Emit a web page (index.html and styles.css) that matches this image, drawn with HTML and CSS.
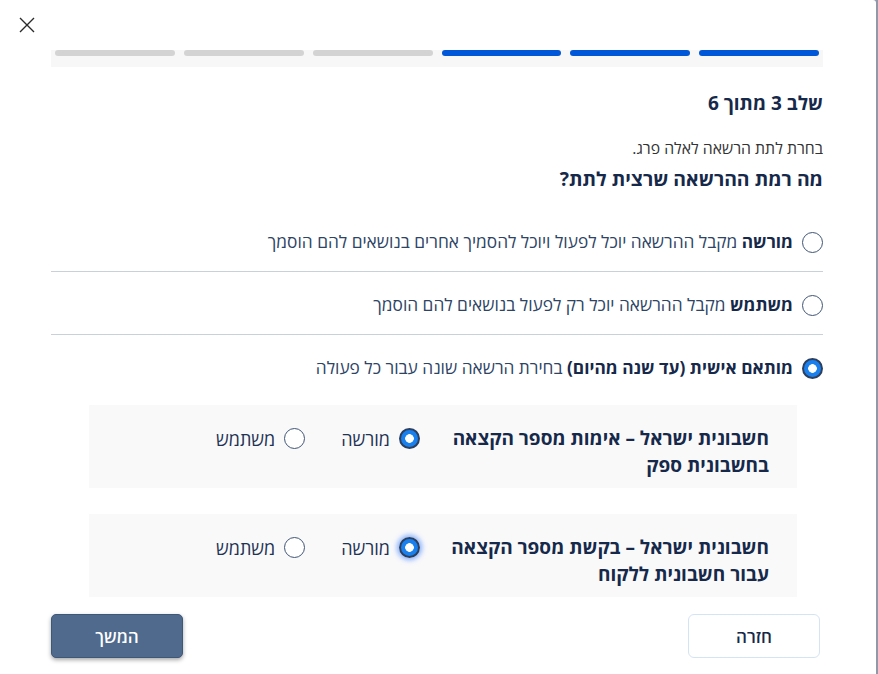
FILE: index.html
```html
<!DOCTYPE html>
<html lang="he" dir="rtl">
<head>
    <meta charset="UTF-8">
    <meta name="viewport" content="width=device-width, initial-scale=1.0">
    <title>מתן הרשאה - שלב 3</title>
    <link rel="stylesheet" href="styles.css">
</head>
<body>
    <div class="modal">
        <button class="close-btn" aria-label="סגירה">
            <svg width="16" height="16" viewBox="0 0 16 16">
                <path d="M1 1 L15 15 M15 1 L1 15" stroke="#2b2b2b" stroke-width="1.4" fill="none"/>
            </svg>
        </button>

        <div class="steps">
            <span class="step done"></span>
            <span class="step done"></span>
            <span class="step done"></span>
            <span class="step"></span>
            <span class="step"></span>
            <span class="step"></span>
        </div>

        <h2 class="step-title">שלב 3 מתוך 6</h2>
        <p class="intro">בחרת לתת הרשאה לאלה פרג.</p>
        <h3 class="question">מה רמת ההרשאה שרצית לתת?</h3>

        <div class="options">
            <label class="option">
                <input type="radio" name="level">
                <span><b>מורשה</b> מקבל ההרשאה יוכל לפעול ויוכל להסמיך אחרים בנושאים להם הוסמך</span>
            </label>
            <label class="option">
                <input type="radio" name="level">
                <span><b>משתמש</b> מקבל ההרשאה יוכל רק לפעול בנושאים להם הוסמך</span>
            </label>
            <label class="option">
                <input type="radio" name="level" checked>
                <span><b>מותאם אישית (עד שנה מהיום)</b> בחירת הרשאה שונה עבור כל פעולה</span>
            </label>
        </div>

        <div class="action-list">
            <div class="action-card">
                <div class="action-title">חשבונית ישראל – אימות מספר הקצאה בחשבונית ספק</div>
                <div class="action-choices">
                    <label class="choice"><input type="radio" name="act1" checked> מורשה</label>
                    <label class="choice"><input type="radio" name="act1"> משתמש</label>
                </div>
            </div>
            <div class="action-card">
                <div class="action-title">חשבונית ישראל – בקשת מספר הקצאה עבור חשבונית ללקוח</div>
                <div class="action-choices">
                    <label class="choice"><input type="radio" name="act2" class="focused" checked> מורשה</label>
                    <label class="choice"><input type="radio" name="act2"> משתמש</label>
                </div>
            </div>
        </div>

        <div class="buttons">
            <button class="btn-back">חזרה</button>
            <button class="btn-next">המשך</button>
        </div>
    </div>
</body>
</html>
```

FILE: styles.css
```css
body {
    margin: 0;
    background-color: #8f99a8;
    font-family: "Open Sans", "Liberation Sans", "DejaVu Sans", sans-serif;
    color: #16294a;
}

.modal {
    position: relative;
    margin-right: 2px;
    min-height: 100vh;
    box-sizing: border-box;
    padding: 50px 53px 0 51px;
    background-color: #fff;
    border-top-right-radius: 3px;
}

.close-btn {
    position: absolute;
    top: 17px;
    left: 19px;
    padding: 0;
    border: none;
    background: none;
    cursor: pointer;
    line-height: 0;
}

/* progress */
.steps {
    display: flex;
    gap: 9px;
    padding: 0 4px 11px;
    background-color: #f7f7f7;
}

.step {
    flex: 1;
    height: 6px;
    border-radius: 3px;
    background-color: #d3d3d3;
}

.step.done {
    background-color: #0057d8;
}

.step-title {
    margin: 24px 0 0;
    font-size: 19px;
    line-height: 24px;
    font-weight: 700;
}

.intro {
    margin: 23px 0 0;
    font-size: 15.8px;
    line-height: 20px;
    color: #333;
}

.question {
    margin: 9px 0 0;
    font-size: 19.4px;
    line-height: 24px;
    font-weight: 700;
}

/* radios */
input[type="radio"] {
    appearance: none;
    -webkit-appearance: none;
    flex: none;
    width: 21px;
    height: 21px;
    margin: 0;
    border: 1.5px solid #3f5575;
    border-radius: 50%;
    background-color: #fff;
    box-sizing: border-box;
}

input[type="radio"]:checked {
    border: 2px solid #2c3f5e;
    background: radial-gradient(circle, #fff 0 4px, #1a80ee 4.6px);
}

input[type="radio"].focused {
    box-shadow: 0 0 5px 2px rgba(40, 115, 255, 0.55);
}

.options {
    margin-top: 18px;
}

.option {
    display: flex;
    align-items: center;
    gap: 9px;
    padding: 22px 0 18px;
    font-size: 17.3px;
    line-height: 22px;
    color: #2e4465;
    border-bottom: 1px solid #c8d0da;
}

.option:last-child {
    border-bottom: none;
}

.option b {
    font-weight: 700;
    color: #16294a;
}

/* custom actions */
.action-list {
    margin-top: 8px;
}

.action-card {
    display: flex;
    align-items: flex-start;
    gap: 24px;
    margin: 0 26px 26px 38px;
    padding: 20px 28px 9px;
    background-color: #f9f9fa;
}

.action-card:last-child {
    margin-bottom: 0;
}

.action-title {
    width: 325px;
    font-size: 19px;
    line-height: 27px;
    font-weight: 700;
}

.action-choices {
    display: flex;
    align-items: center;
    gap: 36px;
    height: 27px;
}

.choice {
    display: flex;
    align-items: center;
    gap: 9px;
    font-size: 18px;
    color: #1f3354;
}

/* footer buttons */
.buttons {
    display: flex;
    justify-content: space-between;
    margin-top: 17px;
    padding-right: 3px;
}

.buttons button {
    width: 132px;
    height: 44px;
    font-family: inherit;
    font-size: 17px;
    cursor: pointer;
}

.btn-back {
    background-color: #fff;
    color: #16294a;
    font-weight: 600;
    border: 1px solid #d5e4f2;
    border-radius: 6px;
}

.btn-next {
    background-color: #4f6a8c;
    color: #fff;
    font-weight: 600;
    border: 1px solid #3e5878;
    border-radius: 5px;
    box-shadow: 0 2px 4px rgba(0, 0, 0, 0.35);
}
```
